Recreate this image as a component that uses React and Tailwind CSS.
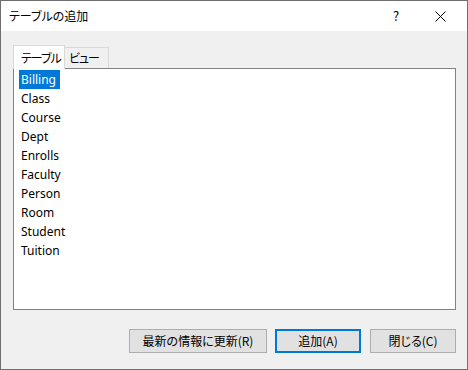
const tables = ['Billing', 'Class', 'Course', 'Dept', 'Enrolls', 'Faculty', 'Person', 'Room', 'Student', 'Tuition']

const jp = { fontFamily: '"Noto Sans CJK JP", sans-serif' }

export default function App() {
  return (
    <div
      className="flex h-[370px] w-[468px] flex-col border border-[#6f6f6f] text-[12px] text-black"
      style={{ fontFamily: '"Noto Sans", "Noto Sans CJK JP", sans-serif' }}
    >
      <div className="flex h-[30px] items-center bg-white pl-2 [font-feature-settings:'palt']" style={jp}>
        <span className="flex-1">テーブルの追加</span>
        <span className="w-[46px] text-center text-[13px]">?</span>
        <span className="flex w-[48px] items-center justify-center pr-[6px]">
          <svg width="11" height="11" viewBox="0 0 11 11" stroke="#000" strokeWidth="1">
            <path d="M0.5 0.5 L10.5 10.5 M10.5 0.5 L0.5 10.5" />
          </svg>
        </span>
      </div>

      <div className="flex flex-1 flex-col bg-[#f0f0f0] pb-4 pl-3 pr-[11px] pt-[13px]">
        <div className="flex items-end whitespace-nowrap tracking-[-1px] [font-feature-settings:'palt']" style={jp}>
          <div className="relative top-px flex h-[24px] w-[52px] items-center border border-b-0 border-[#d9d9d9] bg-white pl-[7px]">
            テーブル
          </div>
          <div className="flex h-[21px] w-[44px] items-center border border-b-0 border-l-0 border-[#d9d9d9] bg-[#f0f0f0] pl-[4px]">
            ビュー
          </div>
        </div>
        <div className="h-[242px] border border-[#828282] bg-white pl-[5px] pt-px">
          {tables.map((name, i) => (
            <div key={name} className="flex h-[19px] items-center">
              <span
                className={
                  i === 0
                    ? 'bg-[#0078d7] pl-[2px] pr-[4px] leading-[19px] text-white'
                    : 'px-[2px] leading-[19px]'
                }
              >
                {name}
              </span>
            </div>
          ))}
        </div>

        <div className="mt-auto flex justify-end gap-2 [font-feature-settings:'palt']" style={jp}>
          <button className="h-[24px] w-[138px] border border-[#adadad] bg-[#e1e1e1]">最新の情報に更新(R)</button>
          <button className="h-[24px] w-[86px] border-2 border-[#0078d7] bg-[#e1e1e1]">追加(A)</button>
          <button className="ml-px h-[24px] w-[86px] border border-[#adadad] bg-[#e1e1e1]">閉じる(C)</button>
        </div>
      </div>
    </div>
  )
}
